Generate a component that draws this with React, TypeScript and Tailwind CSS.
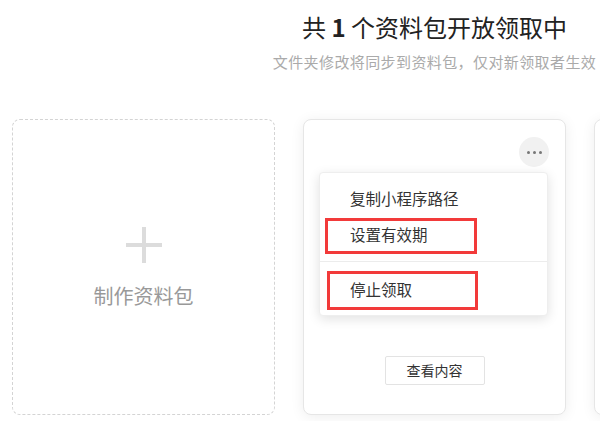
const font = { fontFamily: '"Noto Sans CJK SC", "Noto Sans", sans-serif' };

const menuItems = ["复制小程序路径", "设置有效期"];

function CreateCard() {
  return (
    <div className="flex h-[296px] w-[263px] shrink-0 cursor-pointer flex-col items-center justify-center rounded-lg border border-dashed border-[#d4d4d4] bg-white">
      {/* plus sign */}
      <div className="relative h-[36px] w-[36px]">
        <div className="absolute left-0 top-[16px] h-[4px] w-[36px] bg-[#dcdcdc]" />
        <div className="absolute left-[16px] top-0 h-[36px] w-[4px] bg-[#dcdcdc]" />
      </div>
      <p className="mt-[21px] text-[20px] leading-[24px] text-[#999]">制作资料包</p>
    </div>
  );
}

function PackCard() {
  return (
    <div className="relative flex h-[296px] w-[263px] shrink-0 flex-col items-center justify-end rounded-lg border border-[#e6e6e6] bg-white pb-[29px] shadow-[0_2px_14px_rgba(0,0,0,0.07)]">
      <button className="absolute right-[16px] top-[17px] flex h-[30px] w-[30px] items-center justify-center gap-[3px] rounded-full bg-[#f1f1f1]">
        <span className="h-[3px] w-[3px] rounded-full bg-[#777]" />
        <span className="h-[3px] w-[3px] rounded-full bg-[#777]" />
        <span className="h-[3px] w-[3px] rounded-full bg-[#777]" />
      </button>

      <button className="h-[29px] w-[100px] rounded-[2px] border border-[#e3e3e3] bg-white text-[14px] text-[#333]">
        查看内容
      </button>

      {/* Dropdown menu */}
      <div className="absolute left-[15px] top-[52px] w-[229px] rounded-[4px] border border-[#eeeeee] bg-white shadow-[0_3px_12px_rgba(0,0,0,0.12)]">
        <ul className="pb-[8px] pt-[8px]">
          {menuItems.map((label) => (
            <li key={label} className="flex h-[36px] items-center pl-[30px] text-[15.5px] text-[#333]">
              {label}
            </li>
          ))}
        </ul>
        <div className="h-px bg-[#ececec]" />
        <ul className="pb-[7px] pt-[10px]">
          <li className="flex h-[36px] items-center pl-[30px] text-[15.5px] text-[#333]">停止领取</li>
        </ul>

        {/* red highlight boxes */}
        <div className="pointer-events-none absolute left-[5px] top-[45px] h-[36px] w-[152px] border-[3px] border-[#f23a3a]" />
        <div className="pointer-events-none absolute left-[7px] top-[98px] h-[39px] w-[151px] border-[3px] border-[#f23a3a]" />
      </div>
    </div>
  );
}

function EmptyCard() {
  return (
    <div className="h-[296px] w-[263px] shrink-0 rounded-lg border border-[#e6e6e6] bg-white shadow-[0_2px_14px_rgba(0,0,0,0.07)]" />
  );
}

export default function App() {
  return (
    <div className="h-[421px] w-[600px] overflow-hidden bg-white" style={font}>
      <div className="w-[869px] px-[12px]">
        {/* Header */}
        <div className="pt-[11px] text-center">
          <h1 className="text-[24px] leading-[32px] text-[#222]">
            共 <span className="font-bold">1</span> 个资料包开放领取中
          </h1>
          <p className="mt-[9px] text-[15px] leading-[20px] tracking-[0.4px] text-[#aaa]">
            文件夹修改将同步到资料包，仅对新领取者生效
          </p>
        </div>

        {/* Cards */}
        <div className="mt-[47px] flex gap-[28px]">
          <CreateCard />
          <PackCard />
          <EmptyCard />
        </div>
      </div>
    </div>
  );
}
